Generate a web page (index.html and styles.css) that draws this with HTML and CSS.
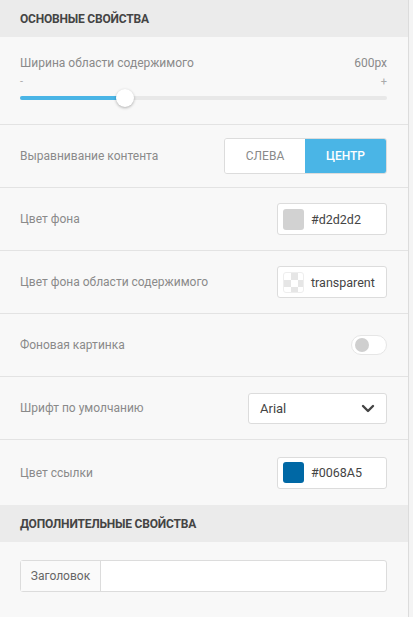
FILE: index.html
```html
<!DOCTYPE html>
<html lang="ru">
<head>
  <meta charset="UTF-8">
  <title>Свойства</title>
  <link rel="stylesheet" href="styles.css">
</head>
<body>
  <div class="panel">
    <div class="section-title">Основные свойства</div>

    <div class="row row-slider">
      <div class="slider-head">
        <span class="label">Ширина области содержимого</span>
        <span class="value">600px</span>
      </div>
      <div class="slider-marks">
        <span>-</span>
        <span>+</span>
      </div>
      <div class="slider">
        <div class="slider-fill" style="width: 105px"></div>
        <div class="slider-thumb" style="left: 105px"></div>
      </div>
    </div>

    <div class="row">
      <span class="label">Выравнивание контента</span>
      <div class="btn-group">
        <button class="btn">Слева</button>
        <button class="btn active">Центр</button>
      </div>
    </div>

    <div class="row">
      <span class="label">Цвет фона</span>
      <div class="color-input">
        <span class="swatch" style="background: #d2d2d2"></span>
        <span class="color-text">#d2d2d2</span>
      </div>
    </div>

    <div class="row">
      <span class="label">Цвет фона области содержимого</span>
      <div class="color-input">
        <span class="swatch swatch-empty"></span>
        <span class="color-text">transparent</span>
      </div>
    </div>

    <div class="row">
      <span class="label">Фоновая картинка</span>
      <div class="toggle"><span class="toggle-knob"></span></div>
    </div>

    <div class="row">
      <span class="label">Шрифт по умолчанию</span>
      <div class="select">
        <span>Arial</span>
        <svg width="14" height="9" viewBox="0 0 14 9">
          <path d="M2 2 L7 7 L12 2" fill="none" stroke="#444" stroke-width="2.4" stroke-linecap="round" stroke-linejoin="round"/>
        </svg>
      </div>
    </div>

    <div class="row row-last">
      <span class="label">Цвет ссылки</span>
      <div class="color-input">
        <span class="swatch" style="background: #0068A5"></span>
        <span class="color-text">#0068A5</span>
      </div>
    </div>

    <div class="section-title">Дополнительные свойства</div>

    <div class="extra">
      <div class="input-group">
        <span class="addon">Заголовок</span>
        <input type="text" class="field">
      </div>
    </div>
  </div>
</body>
</html>
```

FILE: styles.css
```css
body {
  margin: 0;
  background: #f4f4f4;
  font-family: Roboto, "Noto Sans", sans-serif;
}

.panel {
  width: 408px;
  height: 617px;
  background: #f8f8f8;
  border-right: 1px solid #dcdcdc;
}

.section-title {
  height: 37px;
  display: flex;
  align-items: center;
  padding: 0 20px;
  background: #ebebeb;
  color: #444;
  font-size: 12px;
  font-weight: bold;
  text-transform: uppercase;
  letter-spacing: -0.2px;
}

.row {
  height: 62px;
  padding: 0 21px 0 20px;
  display: flex;
  align-items: center;
  justify-content: space-between;
  border-bottom: 1px solid #e3e3e3;
}

.row-last {
  height: 65px;
  border-bottom: none;
}

.label {
  font-size: 12px;
  color: #8a8a8a;
}

.row-slider {
  height: 87px;
  flex-direction: column;
  align-items: stretch;
  justify-content: flex-start;
}

.slider-head {
  display: flex;
  justify-content: space-between;
  margin-top: 19px;
  line-height: 14px;
}

.value {
  font-size: 12px;
  color: #8a8a8a;
}

.slider-marks {
  display: flex;
  justify-content: space-between;
  font-size: 11px;
  color: #aaa;
  line-height: 10px;
  margin-top: 7px;
}

.slider {
  position: relative;
  height: 4px;
  margin-top: 9px;
  background: #e8e8e8;
  border-radius: 2px;
}

.slider-fill {
  height: 4px;
  background: #4ab5e6;
  border-radius: 2px;
}

.slider-thumb {
  position: absolute;
  top: -7px;
  width: 18px;
  height: 18px;
  margin-left: -9px;
  background: #fff;
  border-radius: 50%;
  box-shadow: 0 1px 3px rgba(0, 0, 0, 0.3);
}

.btn-group {
  display: flex;
  height: 34px;
  border: 1px solid #dcdcdc;
  border-radius: 3px;
  overflow: hidden;
}

.btn {
  border: none;
  margin: 0;
  font-family: inherit;
  font-size: 12px;
  text-transform: uppercase;
  background: #fff;
  color: #8a8a8a;
  width: 80px;
}

.btn.active {
  width: 81px;
  background: #4ab5e6;
  color: #fff;
  font-weight: 500;
}

.color-input {
  width: 103px;
  height: 30px;
  display: flex;
  align-items: center;
  gap: 7px;
  padding-left: 5px;
  box-sizing: content-box;
  background: #fff;
  border: 1px solid #dcdcdc;
  border-radius: 3px;
  overflow: hidden;
}

.swatch {
  width: 21px;
  height: 21px;
  border-radius: 3px;
  flex-shrink: 0;
}

.swatch-empty {
  background-color: #fff;
  background-image:
    linear-gradient(45deg, #e6e6e6 25%, transparent 25%, transparent 75%, #e6e6e6 75%),
    linear-gradient(45deg, #e6e6e6 25%, transparent 25%, transparent 75%, #e6e6e6 75%);
  background-size: 14px 14px;
  background-position: 0 0, 7px 7px;
  border: 1px solid #eee;
  box-sizing: border-box;
}

.color-text {
  font-size: 12.5px;
  color: #444;
  white-space: nowrap;
}

.toggle {
  width: 31px;
  height: 18px;
  background: #fff;
  border: 1px solid #e6e6e6;
  border-radius: 10px;
  display: flex;
  align-items: center;
  padding-left: 3px;
}

.toggle-knob {
  width: 14px;
  height: 14px;
  border-radius: 50%;
  background: #cfcfcf;
}

.select {
  width: 139px;
  height: 31px;
  display: flex;
  align-items: center;
  justify-content: space-between;
  padding: 0 11px;
  box-sizing: border-box;
  background: #fff;
  border: 1px solid #dcdcdc;
  border-radius: 3px;
  font-size: 13px;
  color: #444;
}

.extra {
  padding: 18px 21px 0 20px;
}

.input-group {
  display: flex;
  height: 30px;
  background: #fff;
  border: 1px solid #dcdcdc;
  border-radius: 3px;
}

.addon {
  width: 79px;
  display: flex;
  align-items: center;
  justify-content: center;
  font-size: 12px;
  color: #666;
  background: #fafafa;
  border-right: 1px solid #dcdcdc;
}

.field {
  flex: 1;
  border: none;
  outline: none;
  background: transparent;
}
```
